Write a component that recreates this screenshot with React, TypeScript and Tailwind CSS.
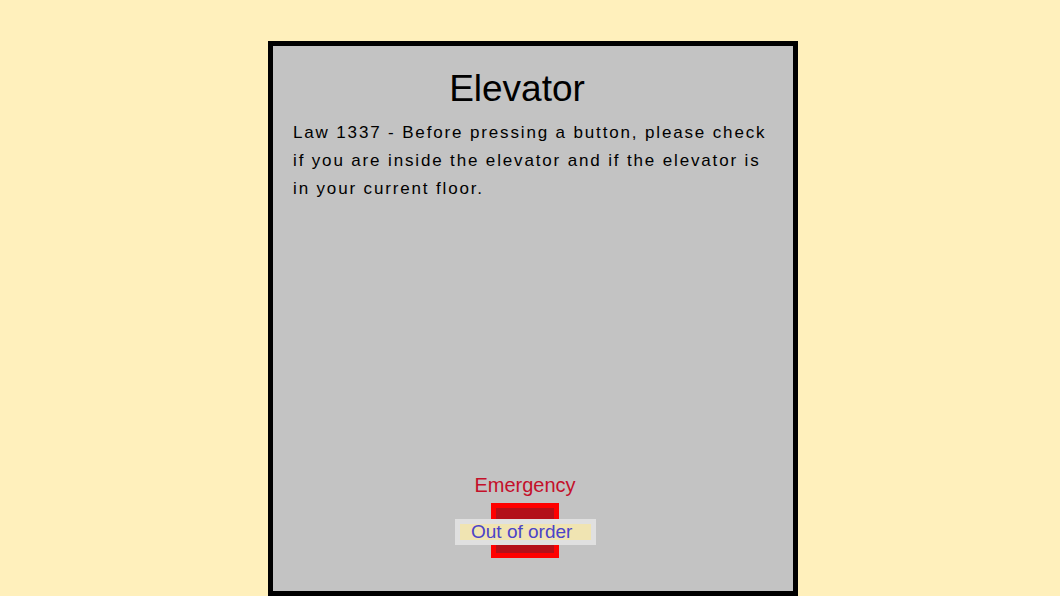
export default function App() {
  return (
    <div className="h-[596px] w-full overflow-hidden bg-[#fff0bc] font-['Liberation_Sans',Arial,sans-serif]">
      <div className="ml-[268px] mt-[41px] flex h-[555px] w-[530px] flex-col border-[5px] border-black bg-[#c3c3c3]">
        <h1 className="mt-[24px] pr-[32px] text-center text-[37px] leading-none text-black">Elevator</h1>
        <p className="mt-[12px] ml-[20px] whitespace-nowrap text-[17px] leading-[28px] tracking-[1.85px] text-black">
          Law 1337 - Before pressing a button, please check
          <br />
          if you are inside the elevator and if the elevator is
          <br />
          in your current floor.
        </p>

        <div className="mt-auto mb-[33px] flex flex-col items-center pr-[16px]">
          <span className="text-[20px] leading-[22px] text-[#c4102a]">Emergency</span>
          <div className="relative mt-[7px] h-[55px] w-[68px] border-[5px] border-[#ff0000] bg-[#b31019]">
            <div className="absolute left-[-41px] top-[11px] h-[26px] w-[141px] border-[5px] border-[#e0e0e0] bg-[#f0e4b2]">
              <span className="block pl-[11px] text-[19px] leading-[16px] text-[#4b43c8]">Out of order</span>
            </div>
          </div>
        </div>
      </div>
    </div>
  );
}
